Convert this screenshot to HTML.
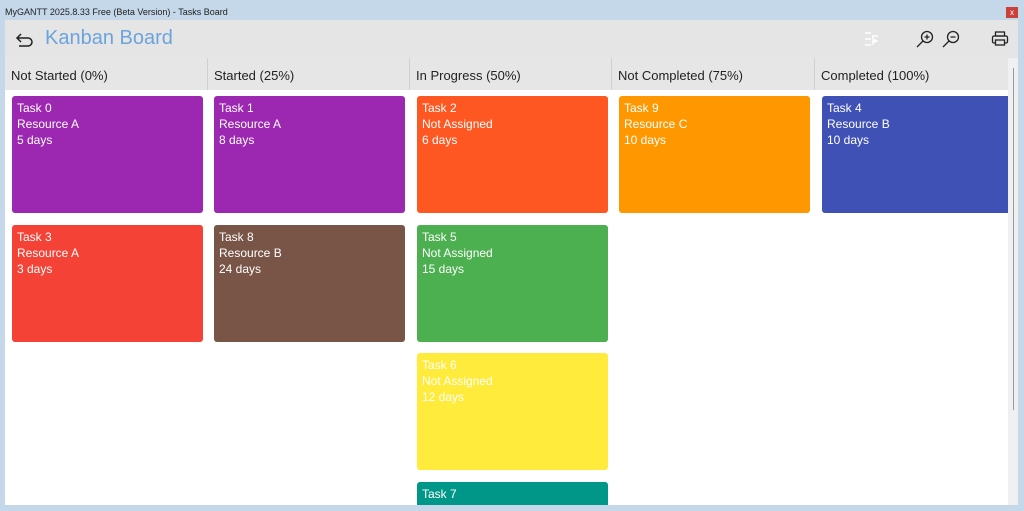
<!DOCTYPE html><html><head><style>
*{margin:0;padding:0;box-sizing:border-box}
body{width:1024px;height:511px;overflow:hidden;background:#c4d8ea;font-family:"Segoe UI","Liberation Sans",sans-serif;position:relative}
.t{position:absolute;left:5px;top:7px;font-size:9px;color:#222}
.x{position:absolute;left:1006px;top:7px;width:12px;height:11px;background:#c9413a;color:#fff;font-size:8px;text-align:center;line-height:11px}
.win{position:absolute;left:5px;top:20px;width:1013px;height:485px;background:#fff}
.tb{position:absolute;left:0;top:0;width:1013px;height:38px;background:#e5e5e5}
.h{position:absolute;left:40px;top:7px;font-size:20px;color:#6ba3dc}
.hr{position:absolute;top:38px;left:0;width:1003px;height:32px;background:#e6e6e6}
.col{position:absolute;top:38px;height:32px;border-right:1px solid #d0d0d0;font-size:13px;color:#222;padding:10px 0 0 6px}
.c{position:absolute;width:191px;height:117px;border-radius:3px;color:#fff;font-size:12px;line-height:16px;padding:4px 5px}
.sb{position:absolute;left:1003px;top:38px;width:10px;height:447px;background:#f0f0f0}
.sb i{position:absolute;left:5px;top:10px;width:1px;height:342px;background:#999}
</style></head><body>
<div class="t">MyGANTT 2025.8.33 Free (Beta Version) - Tasks Board</div>
<div class="x">x</div>
<div class="win">
<div class="tb">
<svg style="position:absolute;left:10px;top:11px" width="20" height="18"><path d="M6 3 L2 7 L6 11 M2 7 H13 A4 4 0 0 1 13 15 H4" fill="none" stroke="#222" stroke-width="1.5"/></svg>
<div class="h">Kanban Board</div>
<svg style="position:absolute;left:858px;top:10px" width="18" height="18"><path d="M2 3h6M2 9h6M2 15h6M10 5v10M10 6h5M10 11h5M12 9v4" stroke="#fff" stroke-width="1.5" fill="none"/></svg>
<svg style="position:absolute;left:910px;top:9px" width="20" height="20"><circle cx="12" cy="8" r="5.5" fill="none" stroke="#222" stroke-width="1.3"/><path d="M8 12L2 18M9.5 8h5M12 5.5v5" stroke="#222" stroke-width="1.3"/></svg>
<svg style="position:absolute;left:936px;top:9px" width="20" height="20"><circle cx="12" cy="8" r="5.5" fill="none" stroke="#222" stroke-width="1.3"/><path d="M8 12L2 18M9.5 8h5" stroke="#222" stroke-width="1.3"/></svg>
<svg style="position:absolute;left:986px;top:10px" width="18" height="18"><rect x="4.5" y="2" width="9" height="4" fill="none" stroke="#222" stroke-width="1.3"/><rect x="1.5" y="6" width="15" height="7" rx="1.5" fill="none" stroke="#222" stroke-width="1.3"/><rect x="4.5" y="10" width="9" height="5" fill="#e5e5e5" stroke="#222" stroke-width="1.3"/></svg>
</div>
<div class="hr"></div>
<div class="col" style="left:0;width:203px">Not Started (0%)</div>
<div class="col" style="left:203px;width:202px">Started (25%)</div>
<div class="col" style="left:405px;width:202px">In Progress (50%)</div>
<div class="col" style="left:607px;width:203px">Not Completed (75%)</div>
<div class="col" style="left:810px;width:193px;border:none">Completed (100%)</div>
<div class="c" style="left:7px;top:76px;background:#9c27b0">Task 0<br>Resource A<br>5 days</div>
<div class="c" style="left:209px;top:76px;background:#9c27b0">Task 1<br>Resource A<br>8 days</div>
<div class="c" style="left:412px;top:76px;background:#ff5722">Task 2<br>Not Assigned<br>6 days</div>
<div class="c" style="left:614px;top:76px;background:#ff9800">Task 9<br>Resource C<br>10 days</div>
<div class="c" style="left:817px;top:76px;width:186px;border-radius:3px 0 0 3px;background:#3f51b5">Task 4<br>Resource B<br>10 days</div>
<div class="c" style="left:7px;top:205px;background:#f44336">Task 3<br>Resource A<br>3 days</div>
<div class="c" style="left:209px;top:205px;background:#795548">Task 8<br>Resource B<br>24 days</div>
<div class="c" style="left:412px;top:205px;background:#4caf50">Task 5<br>Not Assigned<br>15 days</div>
<div class="c" style="left:412px;top:333px;background:#ffeb3b">Task 6<br>Not Assigned<br>12 days</div>
<div class="c" style="left:412px;top:462px;height:23px;border-radius:3px 3px 0 0;background:#009688">Task 7</div>
<div class="sb"><i></i></div>
</div>
</body></html>
